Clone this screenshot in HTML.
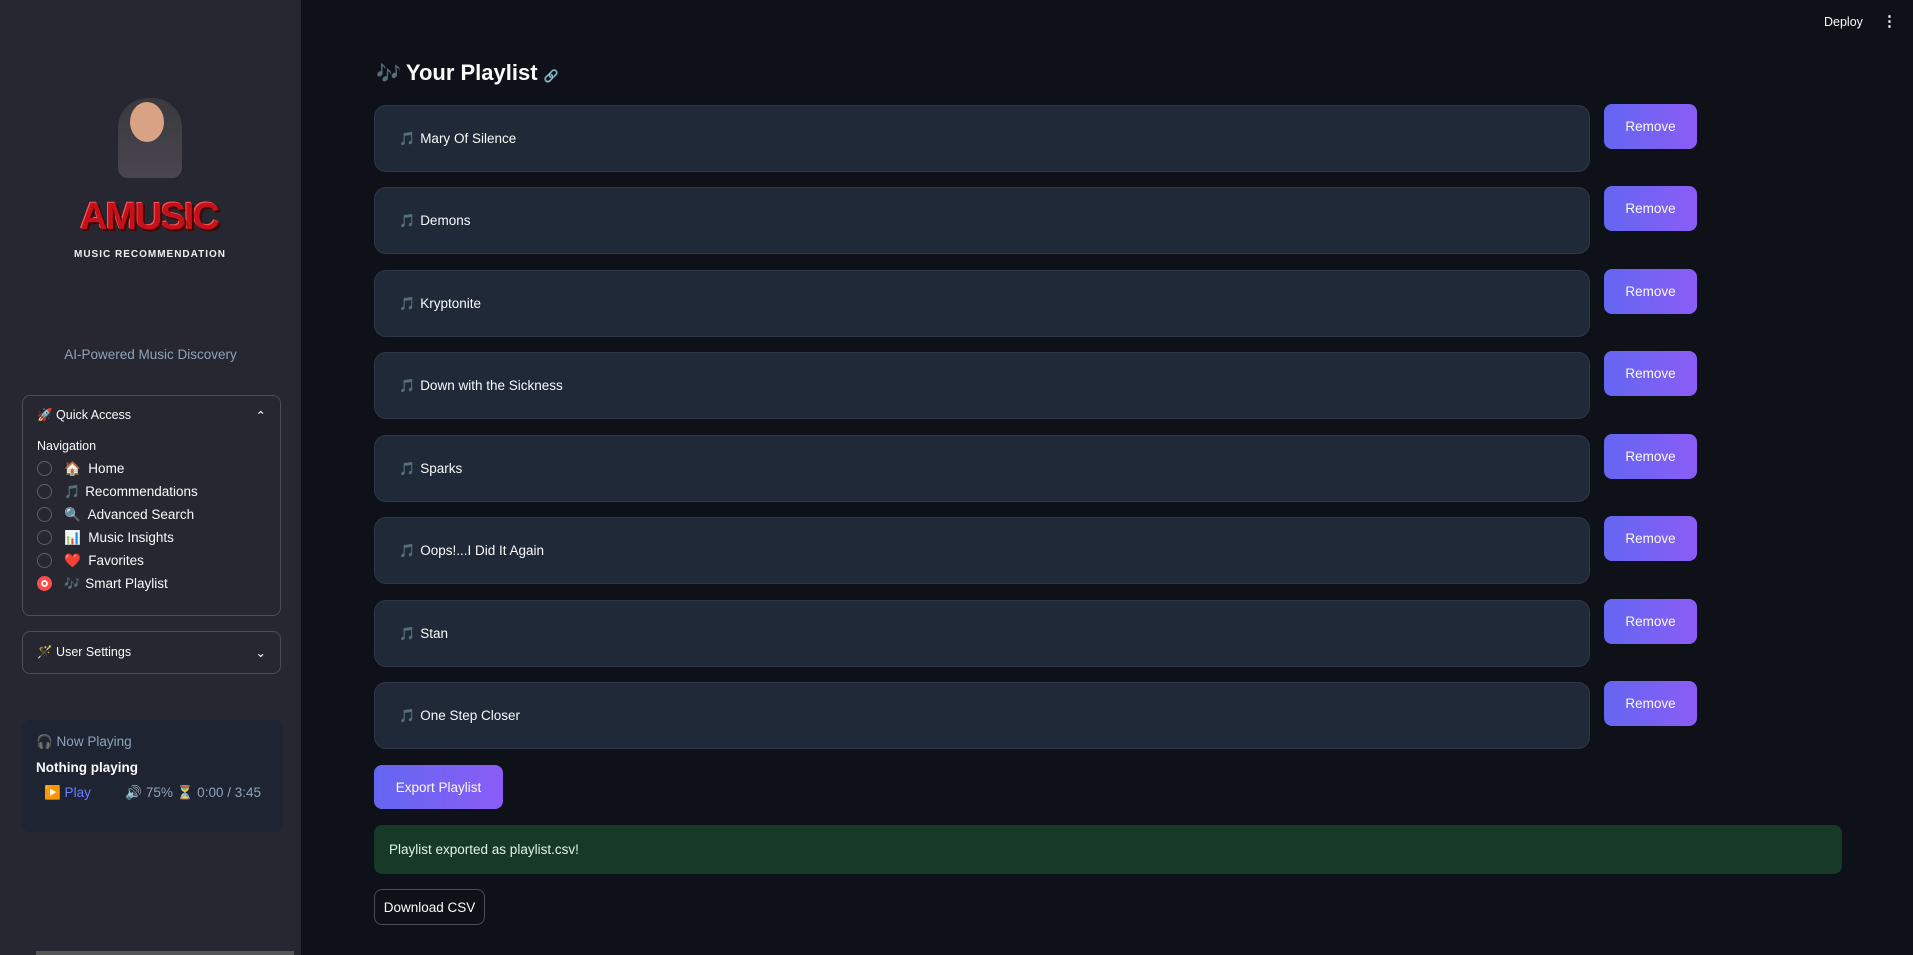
<!DOCTYPE html>
<html><head><meta charset="utf-8"><style>
*{box-sizing:border-box;margin:0;padding:0}
body{width:1913px;height:955px;background:#0e1117;font-family:"Liberation Sans","Noto Sans CJK SC",sans-serif;color:#fafafa;position:relative;overflow:hidden}
.sb{position:absolute;left:0;top:0;width:301px;height:955px;background:#262730}
.abs{position:absolute}
.card{position:absolute;left:374px;width:1216px;height:67px;background:#1f2937;border:1px solid #2d3748;border-radius:12px;font-size:13.5px;display:flex;align-items:center;padding-left:24px}
.rm{position:absolute;left:1604px;width:93px;height:45px;border-radius:8px;background:linear-gradient(90deg,#6366f1,#8b5cf6);font-size:13.5px;display:flex;align-items:center;justify-content:center}
.n{color:#8b6cf0;margin-right:5px;font-size:13px}
.nav{font-size:13.5px;display:flex;align-items:center;height:23px}
.rd{width:15px;height:15px;border:1px solid #5c5f6b;border-radius:50%;margin-right:12px}
</style></head><body>
<div class="sb">
 <div class="abs" style="left:118px;top:98px;width:64px;height:80px;border-radius:30px 30px 10px 10px;background:linear-gradient(#3a3a3e,#4a4550)"></div>
 <div class="abs" style="left:130px;top:102px;width:34px;height:40px;border-radius:50%;background:#d9a285"></div>
 <div class="abs" style="left:74px;top:196px;width:150px;text-align:center;font:900 38px 'Liberation Sans',sans-serif;color:#c5121a;letter-spacing:-2px;text-shadow:2px 2px 0 #400,-1px -1px 0 #f55">AMUSIC</div>
 <div class="abs" style="left:70px;top:249px;width:160px;text-align:center;font:bold 10px 'Liberation Sans',sans-serif;color:#eee;letter-spacing:1px">MUSIC RECOMMENDATION</div>
 <div class="abs" style="left:0;top:347px;width:301px;text-align:center;font-size:13.5px;color:#8ea3ba">AI-Powered Music Discovery</div>
 <div class="abs" style="left:22px;top:395px;width:259px;height:221px;border:1px solid #4a4c57;border-radius:8px;padding:12px 14px">
  <div style="font-size:12.5px;display:flex;justify-content:space-between">🚀 Quick Access<span>⌃</span></div>
  <div style="font-size:12.5px;margin-top:16px;margin-bottom:4px">Navigation</div>
  <div class="nav"><span class="rd"></span>🏠&nbsp; Home</div>
  <div class="nav"><span class="rd"></span><span class="n">🎵</span>Recommendations</div>
  <div class="nav"><span class="rd"></span>🔍&nbsp; Advanced Search</div>
  <div class="nav"><span class="rd"></span>📊&nbsp; Music Insights</div>
  <div class="nav"><span class="rd"></span>❤️&nbsp; Favorites</div>
  <div class="nav"><span class="rd" style="background:#ff4b4b;border:4px solid #ff4b4b;box-shadow:inset 0 0 0 2px #fff"></span><span class="n">🎶</span>Smart Playlist</div>
 </div>
 <div class="abs" style="left:22px;top:631px;width:259px;height:43px;border:1px solid #4a4c57;border-radius:8px;padding:0 14px;font-size:12.5px;display:flex;align-items:center;justify-content:space-between"><span>🪄 User Settings</span><span>⌄</span></div>
 <div class="abs" style="left:22px;top:720px;width:261px;height:112px;background:#1e2432;border-radius:8px;padding:14px 14px">
  <div style="font-size:13.5px;color:#8ea3ba">🎧 Now Playing</div>
  <div style="font-size:13.5px;font-weight:bold;margin-top:10px">Nothing playing</div>
  <div style="font-size:13.5px;margin-top:10px;display:flex;justify-content:space-between;padding-left:8px;padding-right:8px;color:#8ea3ba"><span style="color:#6d7cff">▶️ Play</span><span>🔊 75% ⏳ 0:00 / 3:45</span></div>
 </div>
 <div class="abs" style="left:36px;top:951px;width:258px;height:4px;background:#555"></div>
</div>
<div class="abs" style="left:1824px;top:15px;font-size:12.5px">Deploy</div>
<div class="abs" style="left:1882px;top:12px;font-size:15px;font-weight:bold">⋮</div>
<div class="abs" style="left:376px;top:60px;font-size:22px;font-weight:bold"><span class="n" style="font-size:20px">🎶</span>Your Playlist <span style="font-size:12px;color:#aaa">🔗</span></div>
<div class="card" style="top:105px"><span class="n">🎵</span>Mary Of Silence</div><div class="rm" style="top:104px">Remove</div>
<div class="card" style="top:187px"><span class="n">🎵</span>Demons</div><div class="rm" style="top:186px">Remove</div>
<div class="card" style="top:270px"><span class="n">🎵</span>Kryptonite</div><div class="rm" style="top:269px">Remove</div>
<div class="card" style="top:352px"><span class="n">🎵</span>Down with the Sickness</div><div class="rm" style="top:351px">Remove</div>
<div class="card" style="top:435px"><span class="n">🎵</span>Sparks</div><div class="rm" style="top:434px">Remove</div>
<div class="card" style="top:517px"><span class="n">🎵</span>Oops!...I Did It Again</div><div class="rm" style="top:516px">Remove</div>
<div class="card" style="top:600px"><span class="n">🎵</span>Stan</div><div class="rm" style="top:599px">Remove</div>
<div class="card" style="top:682px"><span class="n">🎵</span>One Step Closer</div><div class="rm" style="top:681px">Remove</div>
<div class="rm" style="left:374px;top:765px;width:129px;height:44px">Export Playlist</div>
<div class="abs" style="left:374px;top:825px;width:1468px;height:49px;background:#173928;border-radius:8px;padding-left:15px;display:flex;align-items:center;font-size:13.5px;color:#dff5e3">Playlist exported as playlist.csv!</div>
<div class="abs" style="left:374px;top:889px;width:111px;height:36px;border:1px solid #4a4c57;border-radius:8px;display:flex;align-items:center;justify-content:center;font-size:13.5px">Download CSV</div>
</body></html>
